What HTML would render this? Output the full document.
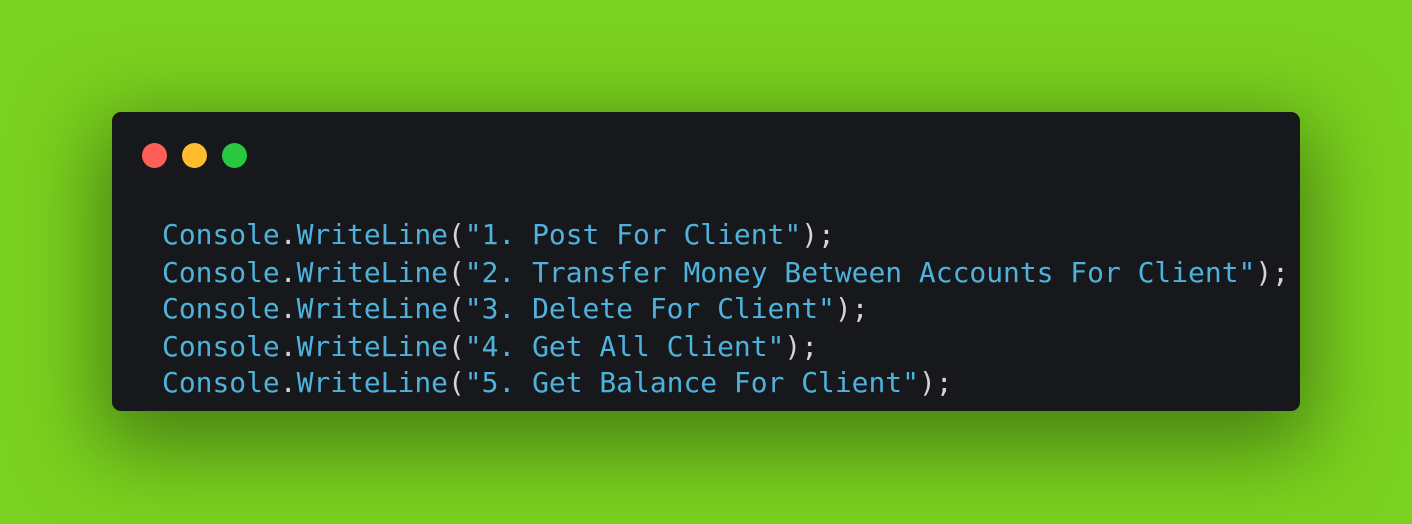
<!DOCTYPE html>
<html><head><style>
html,body{margin:0;padding:0;width:1412px;height:524px;overflow:hidden;background:#7bd11f;}
.win{position:absolute;left:112px;top:112px;width:1188px;height:299px;background:#17181b;border-radius:9px;box-shadow:0 24px 80px 14px rgba(40,80,10,0.6);}
.dot{position:absolute;top:31px;width:25px;height:25px;border-radius:50%;}
.l{position:absolute;left:50px;font-family:"DejaVu Sans Mono","Liberation Mono",monospace;font-size:27.95px;line-height:37px;color:#4fb2dc;white-space:pre;}
.p{color:#d4d4d4;}
</style></head><body>
<div class="win">
<div class="dot" style="left:30px;background:#fe5f57"></div>
<div class="dot" style="left:70px;background:#febc2e"></div>
<div class="dot" style="left:110px;background:#28c840"></div>
<div class="l" style="top:104px">Console<span class="p">.</span>WriteLine<span class="p">(</span>"1. Post For Client"<span class="p">);</span></div>
<div class="l" style="top:142px">Console<span class="p">.</span>WriteLine<span class="p">(</span>"2. Transfer Money Between Accounts For Client"<span class="p">);</span></div>
<div class="l" style="top:178px">Console<span class="p">.</span>WriteLine<span class="p">(</span>"3. Delete For Client"<span class="p">);</span></div>
<div class="l" style="top:216px">Console<span class="p">.</span>WriteLine<span class="p">(</span>"4. Get All Client"<span class="p">);</span></div>
<div class="l" style="top:252px">Console<span class="p">.</span>WriteLine<span class="p">(</span>"5. Get Balance For Client"<span class="p">);</span></div>
</div>
</body></html>
